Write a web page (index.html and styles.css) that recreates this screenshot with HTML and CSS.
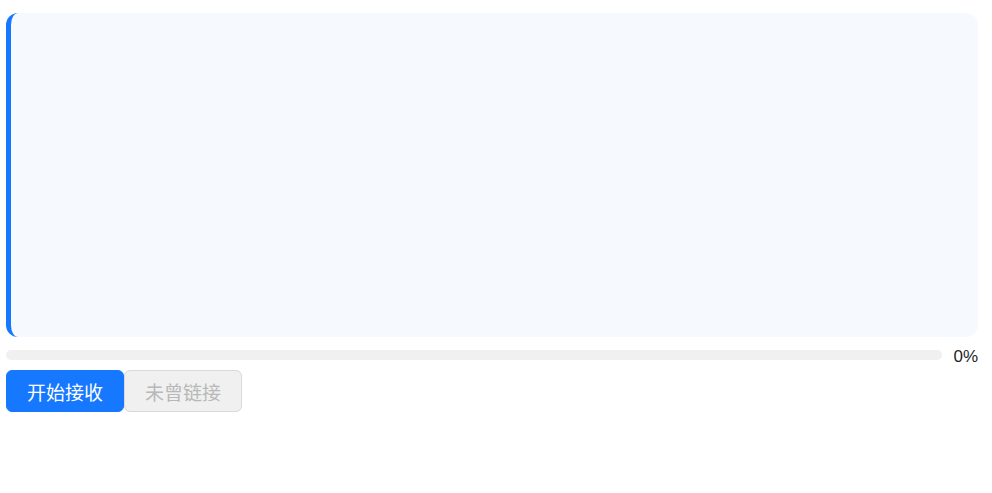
FILE: index.html
```html
<!DOCTYPE html>
<html>
<head>
<meta charset="utf-8">
<link rel="stylesheet" href="styles.css">
</head>
<body>
<div class="wrap">
  <div class="panel"></div>
  <div class="progress-row">
    <div class="track"><div class="fill" style="width:0%"></div></div>
    <span class="pct">0%</span>
  </div>
  <div class="actions">
    <button class="btn primary">开始接收</button>
    <button class="btn disabled">未曾链接</button>
  </div>
</div>
</body>
</html>
```
FILE: styles.css
```css
html, body { margin: 0; padding: 0; background: #fff; }
body { font-family: "Noto Sans CJK SC", "Liberation Sans", sans-serif; }
.wrap { padding: 13px 14px 0 6px; }
.panel {
  height: 324px;
  box-sizing: border-box;
  background: #f6f9fd;
  border-left: 5px solid #1677ff;
  border-radius: 12px;
}
.progress-row {
  display: flex;
  align-items: center;
  margin-top: 8px;
  height: 20px;
}
.track {
  flex: 1;
  height: 10px;
  background: #f0f0f0;
  border-radius: 5px;
  overflow: hidden;
}
.fill { height: 100%; background: #1677ff; }
.pct {
  margin-left: 11px;
  padding-top: 3px;
  font-family: "Liberation Sans", sans-serif;
  font-size: 17px;
  color: #1f1f1f;
  line-height: 20px;
}
.actions { display: flex; margin-top: 5px; }
.btn {
  width: 118px;
  height: 42px;
  box-sizing: border-box;
  font-family: "Noto Sans CJK SC", sans-serif;
  font-size: 19px;
  border-radius: 6px;
  padding: 0;
  cursor: pointer;
}
.primary { background: #1677ff; color: #fff; border: 1px solid #1677ff; }
.disabled { background: #f0f0f0; color: #b8b8b8; border: 1px solid #d9d9d9; cursor: not-allowed; }
```
